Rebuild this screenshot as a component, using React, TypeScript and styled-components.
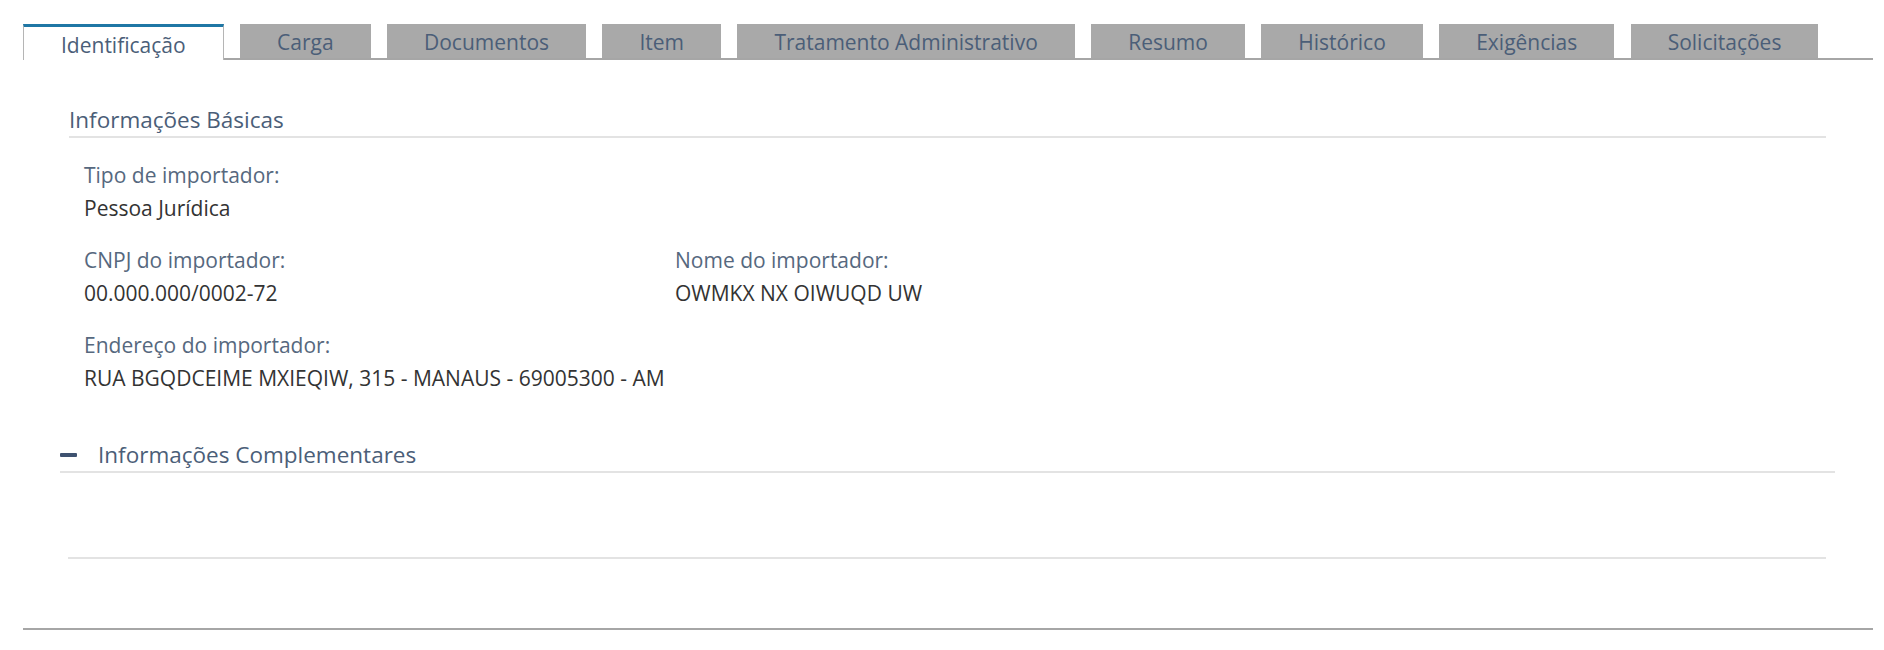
import React from "react";
import styled, { createGlobalStyle } from "styled-components";

const GlobalStyle = createGlobalStyle`
  html, body {
    margin: 0;
    padding: 0;
    background: #ffffff;
  }
  body {
    font-family: "Open Sans", "Noto Sans", Arial, sans-serif;
  }
`;

const Page = styled.div`
  padding: 24px 11px 0 23px;
`;

const TabBar = styled.div`
  display: flex;
  align-items: flex-end;
  gap: 16.4px;
  height: 34px;
  border-bottom: 2px solid #a6a6a6;
`;

const Tab = styled.div<{ $active?: boolean }>`
  box-sizing: border-box;
  height: ${(p) => (p.$active ? "36px" : "34px")};
  margin-bottom: ${(p) => (p.$active ? "-2px" : "0")};
  padding: ${(p) => (p.$active ? "2px 37px 0" : "2px 37px 0")};
  display: flex;
  align-items: center;
  font-size: 21px;
  color: #4b5e78;
  white-space: nowrap;
  background: ${(p) => (p.$active ? "#ffffff" : "#a9a9a9")};
  border-top: ${(p) => (p.$active ? "3px solid #1f77a5" : "none")};
  border-left: ${(p) => (p.$active ? "1px solid #b5b5b5" : "none")};
  border-right: ${(p) => (p.$active ? "1px solid #b5b5b5" : "none")};
`;

const Panel = styled.div`
  padding-top: 45px;
  border-bottom: 2px solid #a6a6a6;
`;

const Section = styled.section`
  margin: 0 47px 0 46px;
`;

const SectionTitle = styled.h2`
  margin: 0;
  font-size: 22.5px;
  font-weight: 400;
  line-height: 30px;
  padding-bottom: 1px;
  color: #4b5e78;
  border-bottom: 2px solid #e3e3e3;
`;

const Fields = styled.div`
  display: grid;
  grid-template-columns: 591px 1fr;
  row-gap: 26px;
  padding: 24px 0 0 15px;
`;

const Field = styled.div<{ $full?: boolean }>`
  grid-column: ${(p) => (p.$full ? "1 / -1" : "auto")};
  display: flex;
  flex-direction: column;
  gap: 7px;
`;

const Label = styled.span`
  font-size: 21px;
  line-height: 26px;
  color: #56687e;
`;

const Value = styled.span`
  font-size: 21px;
  line-height: 26px;
  color: #333333;
`;

const Collapsible = styled.section`
  margin: 49px 38px 0 37px;
`;

const CollapsibleHeader = styled.div`
  display: flex;
  align-items: center;
  gap: 21px;
  line-height: 30px;
  padding-bottom: 1px;
  border-bottom: 2px solid #e3e3e3;
  font-size: 22.5px;
  color: #4b5e78;
`;

const MinusIcon = styled.span`
  display: block;
  width: 17px;
  height: 4px;
  border-radius: 1px;
  background: #3e5270;
`;

const CollapsibleBody = styled.div`
  margin: 0 9px 69px 8px;
  height: 84px;
  border-bottom: 2px solid #e3e3e3;
`;

const tabs = [
  "Identificação",
  "Carga",
  "Documentos",
  "Item",
  "Tratamento Administrativo",
  "Resumo",
  "Histórico",
  "Exigências",
  "Solicitações",
];

export default function App() {
  return (
    <>
      <GlobalStyle />
      <Page>
        <TabBar>
          {tabs.map((t, i) => (
            <Tab key={t} $active={i === 0}>
              {t}
            </Tab>
          ))}
        </TabBar>
        <Panel>
          <Section>
            <SectionTitle>Informações Básicas</SectionTitle>
            <Fields>
              <Field $full>
                <Label>Tipo de importador:</Label>
                <Value>Pessoa Jurídica</Value>
              </Field>
              <Field>
                <Label>CNPJ do importador:</Label>
                <Value>00.000.000/0002-72</Value>
              </Field>
              <Field>
                <Label>Nome do importador:</Label>
                <Value>OWMKX NX OIWUQD UW</Value>
              </Field>
              <Field $full>
                <Label>Endereço do importador:</Label>
                <Value>RUA BGQDCEIME MXIEQIW, 315 - MANAUS - 69005300 - AM</Value>
              </Field>
            </Fields>
          </Section>
          <Collapsible>
            <CollapsibleHeader>
              <MinusIcon />
              <span>Informações Complementares</span>
            </CollapsibleHeader>
            <CollapsibleBody />
          </Collapsible>
        </Panel>
      </Page>
    </>
  );
}
